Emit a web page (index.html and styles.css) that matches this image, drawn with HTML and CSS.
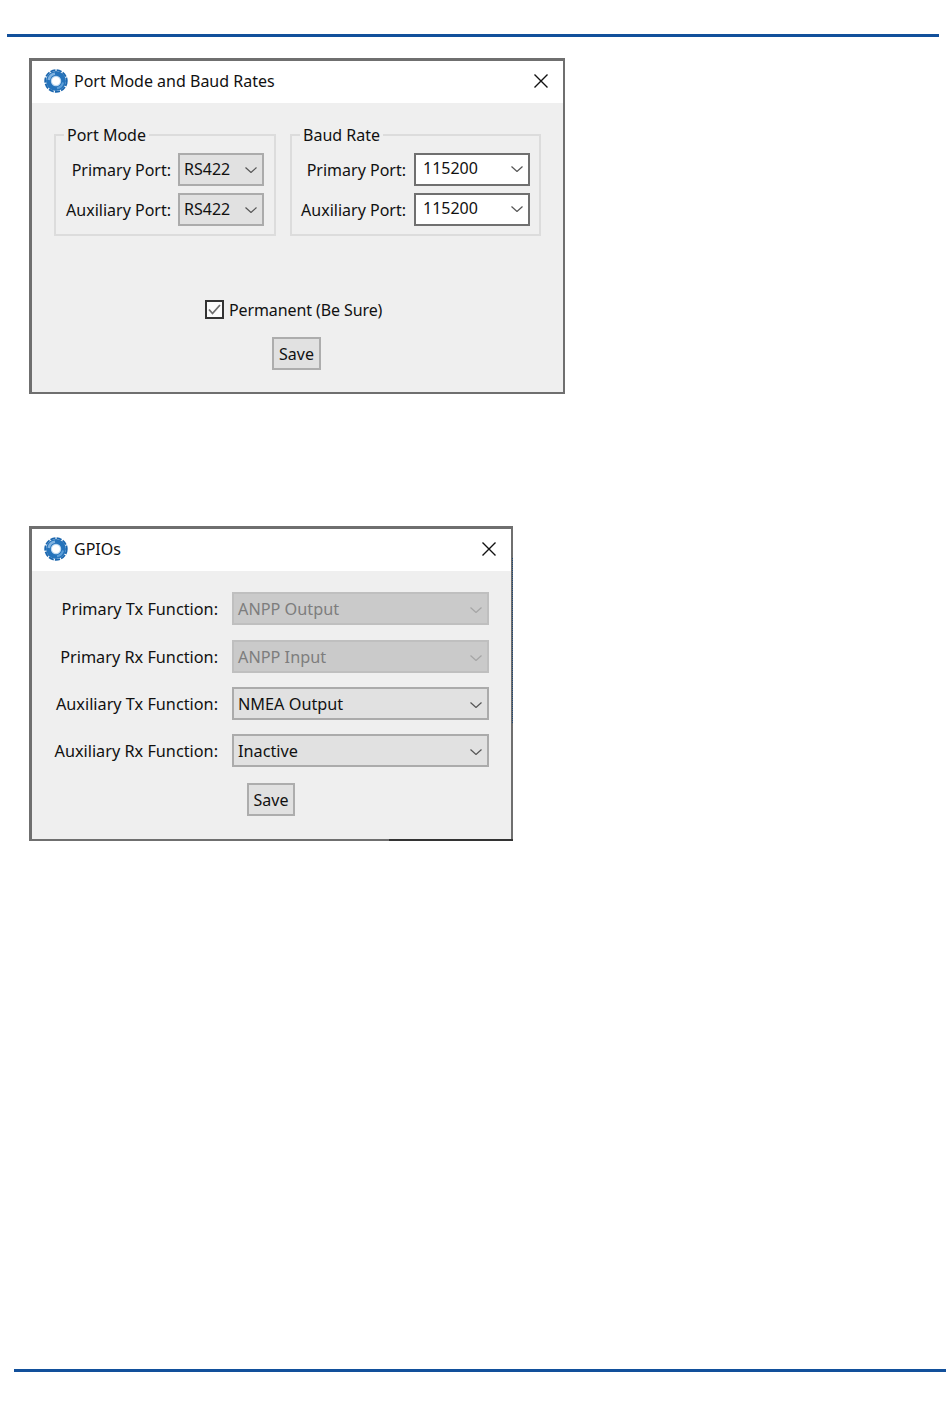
FILE: index.html
```html
<!DOCTYPE html>
<html lang="en">
<head>
    <meta charset="UTF-8">
    <title>Port Mode and GPIOs</title>
    <link rel="stylesheet" href="styles.css">
</head>
<body>
    <svg class="defs" xmlns="http://www.w3.org/2000/svg">
        <symbol id="chevron" viewBox="0 0 12 6">
            <path d="M0.5 0.5L6 5.5L11.5 0.5" fill="none" stroke="currentColor" stroke-width="1.2"/>
        </symbol>
        <symbol id="close" viewBox="0 0 14 14">
            <path d="M0.5 0.5L13.5 13.5M13.5 0.5L0.5 13.5" fill="none" stroke="#111" stroke-width="1.4"/>
        </symbol>
        <symbol id="logo" viewBox="0 0 24 24">
            <circle cx="12" cy="12" r="10" fill="#2573bb"/>
            <circle cx="12" cy="12" r="10.8" fill="none" stroke="#1b66ae" stroke-width="1.8" stroke-dasharray="5.2 1.2"/>
            <path d="M4.8 11A7.4 7.4 0 0 1 11 4.8" fill="none" stroke="#7fb2e0" stroke-width="2.6"/>
            <path d="M19 13.5A7.4 7.4 0 0 1 13 19.2" fill="none" stroke="#5e9fd8" stroke-width="2"/>
            <circle cx="12" cy="12" r="5.2" fill="#bcd8f0"/>
            <circle cx="12" cy="12" r="4" fill="#fff"/>
        </symbol>
    </svg>

    <div class="rule rule-top"></div>

    <div class="dialog dialog-ports">
        <div class="titlebar">
            <svg class="logo"><use href="#logo"/></svg>
            <span class="title">Port Mode and Baud Rates</span>
            <svg class="close"><use href="#close"/></svg>
        </div>
        <div class="body body-ports">
            <div class="groups">
                <fieldset class="group group-mode">
                    <legend>Port Mode</legend>
                    <div class="port-grid">
                        <label>Primary Port:</label>
                        <div class="select grey"><span>RS422</span><svg class="chevron"><use href="#chevron"/></svg></div>
                        <label>Auxiliary Port:</label>
                        <div class="select grey"><span>RS422</span><svg class="chevron"><use href="#chevron"/></svg></div>
                    </div>
                </fieldset>
                <fieldset class="group group-baud">
                    <legend>Baud Rate</legend>
                    <div class="port-grid">
                        <label>Primary Port:</label>
                        <div class="select white"><span>115200</span><svg class="chevron"><use href="#chevron"/></svg></div>
                        <label>Auxiliary Port:</label>
                        <div class="select white"><span>115200</span><svg class="chevron"><use href="#chevron"/></svg></div>
                    </div>
                </fieldset>
            </div>
            <div class="permanent">
                <svg class="checkbox" viewBox="0 0 19 19">
                    <rect x="1" y="1" width="17" height="17" fill="#fbfbfb" stroke="#333" stroke-width="2"/>
                    <path d="M4 9.5L7.5 13.5L15 5" fill="none" stroke="#6e6e6e" stroke-width="1.8"/>
                </svg>
                <span>Permanent (Be Sure)</span>
            </div>
            <button class="save save-ports">Save</button>
        </div>
    </div>

    <div class="dialog dialog-gpio">
        <div class="titlebar">
            <svg class="logo"><use href="#logo"/></svg>
            <span class="title">GPIOs</span>
            <svg class="close"><use href="#close"/></svg>
        </div>
        <div class="body body-gpio">
            <div class="gpio-grid">
                <label>Primary Tx Function:</label>
                <div class="select disabled"><span>ANPP Output</span><svg class="chevron"><use href="#chevron"/></svg></div>
                <label>Primary Rx Function:</label>
                <div class="select disabled"><span>ANPP Input</span><svg class="chevron"><use href="#chevron"/></svg></div>
                <label>Auxiliary Tx Function:</label>
                <div class="select grey"><span>NMEA Output</span><svg class="chevron"><use href="#chevron"/></svg></div>
                <label>Auxiliary Rx Function:</label>
                <div class="select grey"><span>Inactive</span><svg class="chevron"><use href="#chevron"/></svg></div>
            </div>
            <button class="save save-gpio">Save</button>
        </div>
    </div>

    <div class="rule rule-bottom"></div>
</body>
</html>
```

FILE: styles.css
```css
body {
    margin: 0;
    height: 1419px;
    overflow: hidden;
    background-color: white;
    color: #111;
    font-family: "Noto Sans", sans-serif;
    font-size: 16px;
}
.defs {
    display: none;
}
.rule {
    height: 3px;
    width: 932px;
    background-color: #12509b;
}
.rule-top {
    margin: 34px 0 0 7px;
}
.rule-bottom {
    margin: 528px 0 0 14px;
}
.dialog {
    margin-left: 29px;
    border-style: solid;
    border-color: #6f6f6f;
    border-width: 3px 2px 2px 3px;
    background-color: #efefef;
    box-sizing: border-box;
}
.dialog-ports {
    width: 536px;
    height: 336px;
    margin-top: 21px;
}
.dialog-gpio {
    position: relative;
    width: 484px;
    height: 315px;
    margin-top: 132px;
}
/* bits of the page behind the window that show along its edge */
.dialog-gpio::before {
    content: "";
    position: absolute;
    top: 29px;
    left: 480px;
    height: 165px;
    border-left: 1px dotted #1f4a78;
}
.dialog-gpio::after {
    content: "";
    position: absolute;
    left: 357px;
    right: -2px;
    bottom: -2px;
    height: 2px;
    background-color: #333;
}
.titlebar {
    height: 42px;
    box-sizing: border-box;
    display: flex;
    align-items: center;
    padding: 0 15px 3px 12px;
    background-color: white;
}
.logo {
    width: 24px;
    height: 24px;
    margin-right: 6px;
}
.title {
    flex: 1;
}
.close {
    width: 14px;
    height: 14px;
}
.body-ports {
    padding: 22px 0 0 22px;
}
.groups {
    display: flex;
    gap: 14px;
}
.group {
    margin: 0;
    padding: 8px 0 8px;
    border: 2px solid #dcdcdc;
    min-width: 0;
    box-sizing: border-box;
}
.group legend {
    margin-left: 8px;
    padding: 0 3px;
    line-height: 20px;
}
.group-mode {
    width: 222px;
}
.group-baud {
    width: 251px;
}
.port-grid {
    display: grid;
    row-gap: 7px;
    align-items: center;
}
.group-mode .port-grid {
    grid-template-columns: 115px 86px;
    column-gap: 7px;
}
.group-baud .port-grid {
    grid-template-columns: 114px 116px;
    column-gap: 8px;
}
label {
    text-align: right;
    white-space: nowrap;
}
.select {
    height: 33px;
    box-sizing: border-box;
    display: flex;
    align-items: center;
    justify-content: space-between;
    padding: 0 5px 1px 4px;
    border: 2px solid #ababab;
    background-color: #e1e1e1;
}
.select.white {
    border-color: #707070;
    background-color: white;
    padding-left: 7px;
    padding-bottom: 3px;
}
.select.disabled {
    border-color: #bfbfbf;
    background-color: #cacaca;
    color: #7d7d7d;
}
.chevron {
    width: 12px;
    height: 6px;
    color: #555;
    margin-top: 2px;
}
.select.disabled .chevron {
    color: #a5a5a5;
}
.permanent {
    display: flex;
    align-items: center;
    gap: 5px;
    margin: 64px 0 0 151px;
    height: 19px;
    letter-spacing: -0.1px;
}
.checkbox {
    width: 19px;
    height: 19px;
}
.save {
    display: block;
    height: 33px;
    padding: 0;
    border: 2px solid #adadad;
    background-color: #e1e1e1;
    color: #111;
    font-family: inherit;
    font-size: 16px;
}
.save-ports {
    width: 49px;
    margin: 18px 0 0 218px;
}
.save-gpio {
    width: 48px;
    margin: 16px 0 0 215px;
}
.body-gpio {
    padding-top: 21px;
}
.gpio-grid {
    display: grid;
    grid-template-columns: 186px 257px;
    column-gap: 14px;
    row-gap: 14px;
    align-items: center;
    font-size: 16.25px;
}
.gpio-grid .select {
    padding-bottom: 0;
}
.gpio-grid .select:first-of-type {
    margin-bottom: 1px;
}
```
